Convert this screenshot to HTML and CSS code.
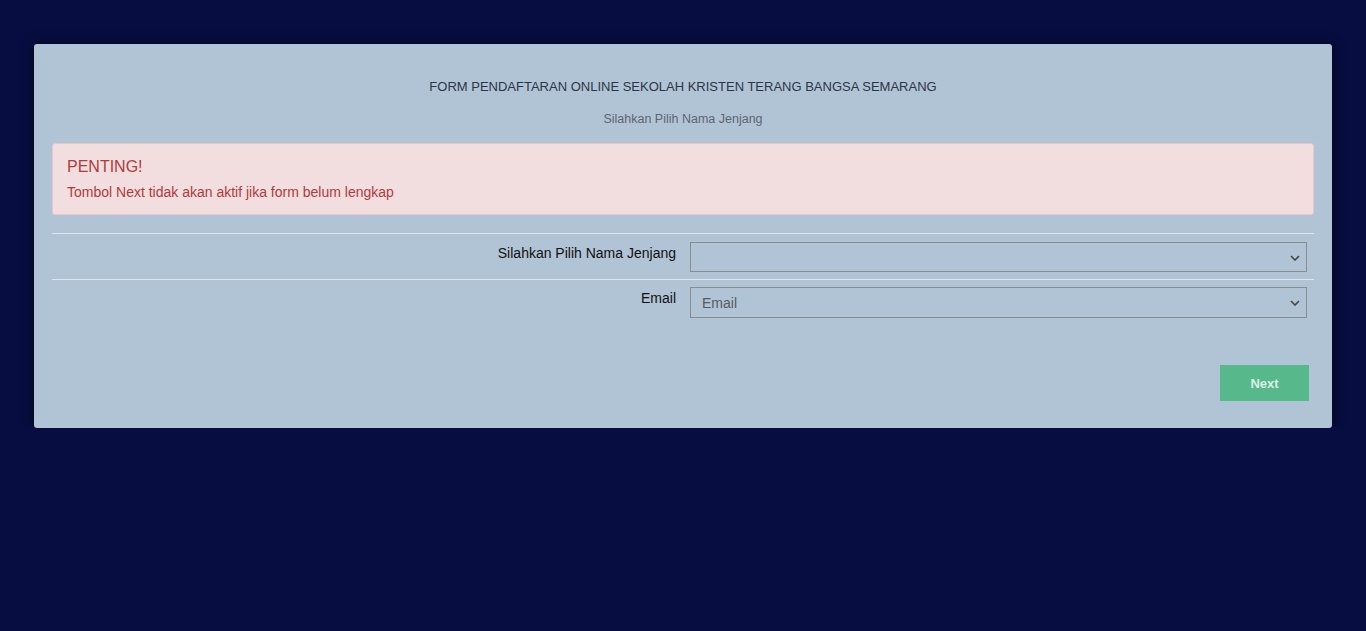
FILE: index.html
```html
<!DOCTYPE html>
<html>
<head>
<meta charset="utf-8">
<link rel="stylesheet" href="styles.css">
</head>
<body>
<div class="page">
  <div class="card">
    <h1 class="title">FORM PENDAFTARAN ONLINE SEKOLAH KRISTEN TERANG BANGSA SEMARANG</h1>
    <p class="subtitle">Silahkan Pilih Nama Jenjang</p>
    <div class="alert">
      <h4 class="alert-title">PENTING!</h4>
      <p class="alert-text">Tombol Next tidak akan aktif jika form belum lengkap</p>
    </div>
    <div class="divider"></div>
    <div class="row row-first">
      <label class="label">Silahkan Pilih Nama Jenjang</label>
      <div class="field">
        <div class="select"><span class="value"></span><svg class="chev" width="10" height="6" viewBox="0 0 10 6"><path d="M1 1 L5 5 L9 1" fill="none" stroke="#444" stroke-width="1.6"/></svg></div>
      </div>
    </div>
    <div class="divider divider-second"></div>
    <div class="row row-second">
      <label class="label">Email</label>
      <div class="field">
        <div class="select tall"><span class="value">Email</span><svg class="chev" width="10" height="6" viewBox="0 0 10 6"><path d="M1 1 L5 5 L9 1" fill="none" stroke="#444" stroke-width="1.6"/></svg></div>
      </div>
    </div>
    <div class="actions">
      <button class="btn">Next</button>
    </div>
  </div>
</div>
</body>
</html>
```

FILE: styles.css
```css
html, body {
  margin: 0;
  padding: 0;
  background: #070d40;
  font-family: "Liberation Sans", Arial, sans-serif;
}
.page {
  padding: 44px 34px 0 34px;
}
.card {
  background: #b1c4d6;
  border-radius: 3px;
  box-shadow: 0 0 12px rgba(0, 0, 0, 0.6);
  padding: 34px 18px 27px 18px;
}
.title {
  margin: 0;
  font-size: 13px;
  font-weight: normal;
  line-height: 18px;
  color: #2b3645;
  text-align: center;
}
.subtitle {
  margin: 15px 0 0 0;
  font-size: 12.5px;
  line-height: 16px;
  color: #5d6670;
  text-align: center;
}
.alert {
  margin-top: 16px;
  background: #f2dede;
  border: 1px solid #e9c6cf;
  border-radius: 3px;
  padding: 13px 14px 13px 14px;
  color: #b13a3e;
  height: 72px;
  box-sizing: border-box;
}
.alert-title {
  margin: 0;
  font-size: 16px;
  font-weight: normal;
  line-height: 20px;
}
.alert-text {
  margin: 7px 0 0 0;
  font-size: 14px;
  line-height: 16px;
}
.divider {
  height: 1px;
  background: #dde5ee;
  margin-top: 18px;
}
.divider.divider-second {
  margin-top: 7px;
}
.row {
  display: flex;
}
.row-first {
  margin-top: 8px;
}
.row-second {
  margin-top: 7px;
}
.label {
  flex: 1 1 0;
  text-align: right;
  padding: 3px 7px 0 7px;
  font-size: 14px;
  line-height: 16px;
  color: #111;
}
.field {
  flex: 1 1 0;
  padding: 0 7px;
}
.select {
  height: 30px;
  border: 1px solid #868e8f;
  box-sizing: border-box;
  display: flex;
  align-items: center;
  justify-content: space-between;
  padding: 0 6px 0 11px;
}
.select.tall {
  height: 31px;
}
.value {
  font-size: 14px;
  color: #555b60;
}
.chev {
  display: block;
  margin-top: 1px;
}
.actions {
  display: flex;
  justify-content: flex-end;
  padding-right: 5px;
  margin-top: 47px;
}
.btn {
  width: 89px;
  height: 36px;
  border: none;
  background: #56b88b;
  color: #dcefe6;
  font-family: "Liberation Sans", Arial, sans-serif;
  font-size: 13px;
  font-weight: bold;
  padding: 0;
}
```
